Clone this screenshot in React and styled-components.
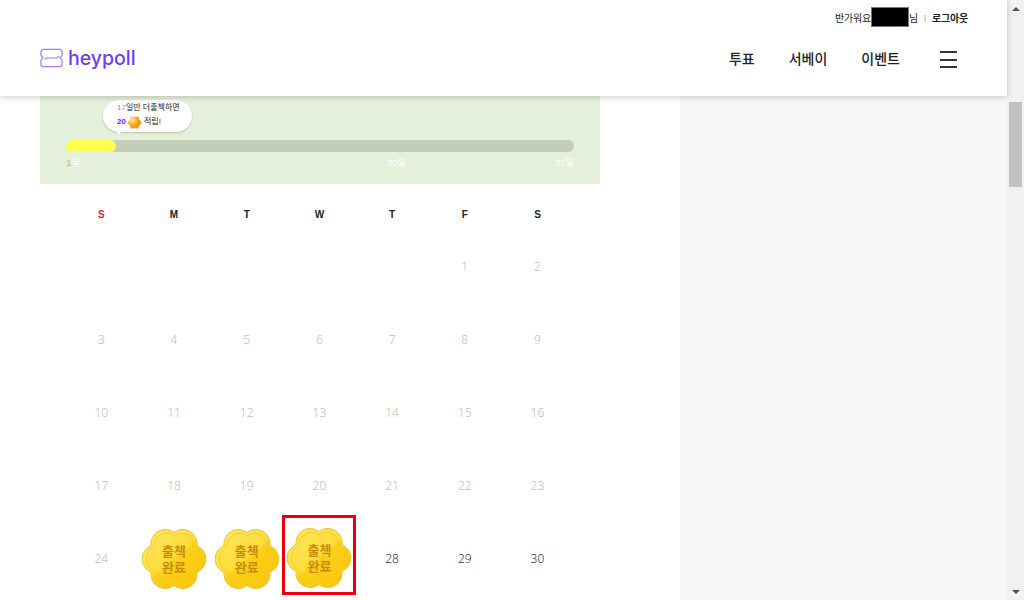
import React from 'react'
import styled, { createGlobalStyle } from 'styled-components'

const GlobalStyle = createGlobalStyle`
    html, body {
        margin: 0;
        height: 100%;
        overflow: hidden;
    }
    body {
        background: #fff;
        font-family: "Liberation Sans", "Noto Sans CJK KR", sans-serif;
    }
`

const Frame = styled.div`
    display: flex;
    width: 1024px;
    height: 600px;
    overflow: hidden;
`

const Page = styled.div`
    display: flex;
    flex-direction: column;
    width: 1007px;
    height: 600px;
`

const Header = styled.header`
    position: relative;
    z-index: 2;
    flex: none;
    height: 96px;
    padding: 0 50px 0 40px;
    box-sizing: border-box;
    background: #fff;
    box-shadow: 0 1px 6px rgba(0, 0, 0, 0.22);
`

const TopLine = styled.div`
    display: flex;
    justify-content: flex-end;
    align-items: center;
    height: 20px;
    padding-top: 7px;
    margin-right: -11px;
    font-size: 10px;
    letter-spacing: -0.2px;
    color: #222;
`

const Masked = styled.span`
    width: 38px;
    height: 20px;
    box-sizing: border-box;
    border: 1px solid #777;
    background: #000;
`

const Divider = styled.span`
    margin: 0 6px;
    color: #888;
    font-size: 8px;
`

const Logout = styled.span`
    font-weight: 700;
`

const MainLine = styled.div`
    display: flex;
    justify-content: space-between;
    align-items: center;
    height: 48px;
    margin-top: 7px;
`

const Logo = styled.div`
    display: flex;
    align-items: center;
    gap: 5px;
    color: #6f3cf6;
    font-family: Inter, "Liberation Sans", sans-serif;
    font-size: 19.5px;
    font-weight: 500;
`

const Nav = styled.nav`
    display: flex;
    align-items: center;
    font-size: 14px;
    font-weight: 500;
    color: #222;
`

const NavItem = styled.span`
    margin-right: 34px;
`

const MenuIcon = styled.div`
    display: flex;
    flex-direction: column;
    gap: 5.5px;
    width: 17px;
    margin: 3px 0 0 6px;
`

const MenuLine = styled.span`
    height: 2px;
    background: #333;
`

const Body = styled.div`
    display: flex;
    flex: 1;
    min-height: 0;
`

const Main = styled.main`
    width: 680px;
    padding-left: 40px;
    box-sizing: border-box;
`

const Aside = styled.aside`
    flex: 1;
    background: #f7f7f7;
`

const Panel = styled.section`
    position: relative;
    width: 560px;
    height: 88px;
    padding: 44px 26px 0;
    box-sizing: border-box;
    background: #e4f0da;
`

const Bubble = styled.div`
    position: absolute;
    top: 4px;
    left: 63px;
    width: 89px;
    height: 32px;
    padding: 1px 0 0 14px;
    box-sizing: border-box;
    border-radius: 16px;
    background: #fff;
    box-shadow: 0 1px 2px rgba(0, 0, 0, 0.2);
    font-size: 8px;
    line-height: 14px;
    color: #222;

    &::after {
        content: '';
        position: absolute;
        left: 13px;
        bottom: -3px;
        border-left: 3px solid transparent;
        border-right: 3px solid transparent;
        border-top: 4px solid #fff;
    }
`

const BubbleLine = styled.div`
    display: flex;
    align-items: center;
    white-space: nowrap;
`

const Accent = styled.span`
    color: ${(p) => p.$color};
    font-weight: ${(p) => (p.$bold ? 700 : 400)};
`

const CoinIcon = styled.svg`
    flex: none;
    margin: 0 3px 0 2px;
`

const Track = styled.div`
    height: 12px;
    border-radius: 6px;
    background: #c2ceb7;
`

const Fill = styled.div`
    width: 50px;
    height: 12px;
    border-radius: 6px;
    background: #ffff4d;
`

const Ticks = styled.div`
    position: relative;
    display: flex;
    justify-content: space-between;
    margin-top: 5px;
    font-size: 9.5px;
    line-height: 12px;
    color: #fff;
`

const MiddleTick = styled.span`
    position: absolute;
    left: 321px;
`

const WeekHead = styled.div`
    display: grid;
    grid-template-columns: repeat(7, 72.7px);
    margin-left: 25px;
`

const WeekDay = styled.div`
    display: flex;
    align-items: center;
    justify-content: center;
    height: 46px;
    padding-top: 14px;
    box-sizing: border-box;
    font-size: 10px;
    font-weight: 700;
    color: ${(p) => (p.$sunday ? '#e2222e' : '#222')};
`

const Calendar = styled.div`
    display: grid;
    grid-template-columns: repeat(7, 72.7px);
    grid-auto-rows: 73px;
    width: 510px;
    margin-left: 25px;
`

const Day = styled.div`
    display: flex;
    align-items: center;
    justify-content: center;
    font-family: "Noto Sans", sans-serif;
    font-weight: 300;
    font-size: 12px;
    color: ${(p) => (p.$active ? '#333' : '#bdbdbd')};
`

const StampWrap = styled.div`
    position: relative;
    display: flex;
    align-items: center;
    justify-content: center;
    flex: none;
    width: 64px;
    height: 64px;
`

const StampShape = styled.svg`
    position: absolute;
    top: 0;
    left: 0;
`

const StampText = styled.span`
    position: relative;
    top: 1px;
    font-family: "Liberation Sans", "Noto Sans CJK KR", sans-serif;
    font-size: 13px;
    line-height: 16px;
    font-weight: 700;
    text-align: center;
    color: #c98a08;
`

const Highlight = styled.div`
    display: flex;
    align-items: center;
    justify-content: center;
    align-self: flex-end;
    flex: none;
    width: 74px;
    height: 80px;
    padding-top: 5px;
    box-sizing: border-box;
    border: 3px solid #e8000e;
`

const Scrollbar = styled.div`
    display: flex;
    flex-direction: column;
    align-items: center;
    width: 17px;
    height: 600px;
    background: #f1f1f1;
`

const ArrowBox = styled.div`
    display: flex;
    align-items: center;
    justify-content: center;
    flex: none;
    width: 17px;
    height: 17px;
`

const Arrow = styled.span`
    border-left: 4px solid transparent;
    border-right: 4px solid transparent;
    ${(p) => (p.$up ? 'border-bottom: 4px solid #505050;' : 'border-top: 4px solid #505050;')}
`

const Thumb = styled.div`
    flex: none;
    width: 13px;
    height: 85px;
    margin-top: 85px;
    margin-bottom: auto;
    background: #c1c1c1;
`

// six round petals joined at the valley points of a hexagon
function flowerPath(cx, cy, valley, petal) {
    let d = ''
    for (let i = 0; i < 6; i++) {
        const a = (i * 60 - 90) * (Math.PI / 180)
        const x = (cx + valley * Math.cos(a)).toFixed(2)
        const y = (cy + valley * Math.sin(a)).toFixed(2)
        d += i === 0 ? `M${x} ${y}` : `A${petal} ${petal} 0 0 1 ${x} ${y}`
    }
    const topY = (cy - valley).toFixed(2)
    return `${d}A${petal} ${petal} 0 0 1 ${cx} ${topY}Z`
}

const outerFlower = flowerPath(32, 32, 26.5, 14.3)
const innerFlower = flowerPath(32, 32, 23, 12.4)
const coinFlower = flowerPath(7, 7, 5.8, 3.1)

function LogoMark() {
    return (
        <svg width="23" height="20" viewBox="0 0 24 20" fill="none" stroke="#a67bff" strokeWidth="1.3">
            <path d="M3.500 1h17A2.500 2.500 0 0 1 23 3.500V7c0 1-1.500 1.500-2 2.700.5 1.300 2 1.800 2 2.800v4a2.500 2.500 0 0 1-2.500 2.500h-17A2.500 2.500 0 0 1 1 16.500v-4c0-1 1.500-1.500 2-2.800C2.500 8.500 1 8 1 7V3.500A2.500 2.500 0 0 1 3.500 1Z" />
            <path d="M5 11.500 7 10h10.500l2-1.800" />
        </svg>
    )
}

function Stamp() {
    return (
        <StampWrap>
            <StampShape width="64" height="64" viewBox="0 0 64 64">
                <defs>
                    <linearGradient id="gold" gradientUnits="userSpaceOnUse" x1="10" y1="6" x2="54" y2="58">
                        <stop offset="0" stopColor="#ffe55c" />
                        <stop offset="0.48" stopColor="#fedc3a" />
                        <stop offset="0.52" stopColor="#fbd018" />
                        <stop offset="1" stopColor="#f9c70c" />
                    </linearGradient>
                </defs>
                <path d={outerFlower} fill="url(#gold)" stroke="#efc12e" strokeWidth="1" />
                <path d={innerFlower} fill="none" stroke="#f3c624" strokeWidth="0.7" />
            </StampShape>
            <StampText>출첵<br />완료</StampText>
        </StampWrap>
    )
}

function Coin() {
    return (
        <CoinIcon width="13" height="13" viewBox="0 0 14 14">
            <defs>
                <radialGradient id="coin" cx="0.3" cy="0.3" r="0.8">
                    <stop offset="0" stopColor="#ffe9a8" />
                    <stop offset="0.55" stopColor="#f8a71c" />
                    <stop offset="1" stopColor="#f08c08" />
                </radialGradient>
            </defs>
            <path d={coinFlower} fill="url(#coin)" />
        </CoinIcon>
    )
}

const weekDays = ['S', 'M', 'T', 'W', 'T', 'F', 'S']
const blanks = [0, 1, 2, 3, 4]
const days = Array.from({ length: 23 }, (_, i) => i + 1)

export default function App() {
    return (
        <Frame>
            <GlobalStyle />
            <Page>
                <Header>
                    <TopLine>
                        반가워요<Masked />님<Divider>|</Divider><Logout>로그아웃</Logout>
                    </TopLine>
                    <MainLine>
                        <Logo>
                            <LogoMark />
                            heypoll
                        </Logo>
                        <Nav>
                            <NavItem>투표</NavItem>
                            <NavItem>서베이</NavItem>
                            <NavItem>이벤트</NavItem>
                            <MenuIcon>
                                <MenuLine />
                                <MenuLine />
                                <MenuLine />
                            </MenuIcon>
                        </Nav>
                    </MainLine>
                </Header>
                <Body>
                    <Main>
                        <Panel>
                            <Bubble>
                                <BubbleLine><Accent $color="#f0589e">17</Accent>일만 더출첵하면</BubbleLine>
                                <BubbleLine><Accent $color="#7a1cf0" $bold>20</Accent><Coin /> 적립!</BubbleLine>
                            </Bubble>
                            <Track><Fill /></Track>
                            <Ticks>
                                <span><Accent $color="#a8d88a" $bold>1</Accent>일</span>
                                <MiddleTick>20일</MiddleTick>
                                <span>31일</span>
                            </Ticks>
                        </Panel>
                        <WeekHead>
                            {weekDays.map((d, i) => (
                                <WeekDay key={i} $sunday={i === 0}>{d}</WeekDay>
                            ))}
                        </WeekHead>
                        <Calendar>
                            {blanks.map((b) => <Day key={b} />)}
                            {days.map((d) => <Day key={d}>{d}</Day>)}
                            <Day>24</Day>
                            <Day><Stamp /></Day>
                            <Day><Stamp /></Day>
                            <Day><Highlight><Stamp /></Highlight></Day>
                            <Day $active>28</Day>
                            <Day $active>29</Day>
                            <Day $active>30</Day>
                        </Calendar>
                    </Main>
                    <Aside />
                </Body>
            </Page>
            <Scrollbar>
                <ArrowBox><Arrow $up /></ArrowBox>
                <Thumb />
                <ArrowBox><Arrow /></ArrowBox>
            </Scrollbar>
        </Frame>
    )
}
